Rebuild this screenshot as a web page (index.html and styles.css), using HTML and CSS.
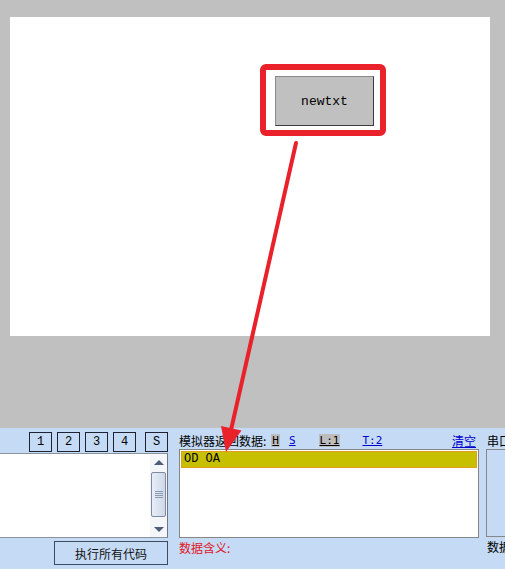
FILE: index.html
```html
<!DOCTYPE html>
<html lang="zh-CN">
<head>
    <meta charset="UTF-8">
    <title>模拟器</title>
    <link rel="stylesheet" href="styles.css">
</head>
<body>

<div class="stage">
    <div class="canvas">
        <div class="widget">newtxt</div>
    </div>
</div>

<div class="panel">
    <div class="col-code">
        <div class="slots">
            <span class="slot">1</span>
            <span class="slot">2</span>
            <span class="slot">3</span>
            <span class="slot">4</span>
            <span class="slot slot-s">S</span>
        </div>
        <div class="code-box">
            <div class="code-area"></div>
            <div class="scrollbar">
                <div class="sb-btn"><span class="tri-up"></span></div>
                <div class="sb-thumb"><span class="grip"></span></div>
                <div class="sb-track"></div>
                <div class="sb-btn"><span class="tri-down"></span></div>
            </div>
        </div>
        <button class="run">执行所有代码</button>
    </div>

    <div class="col-recv">
        <div class="recv-head">
            <span class="caption">模拟器返回数据:</span>
            <span class="tag tag-h">H</span>
            <a class="link link-s" href="#">S</a>
            <span class="tag tag-l">L:1</span>
            <a class="link link-t" href="#">T:2</a>
            <a class="link link-clear" href="#">清空</a>
        </div>
        <div class="recv-box">
            <div class="recv-row">OD OA</div>
        </div>
        <div class="meaning">数据含义:</div>
    </div>

    <div class="col-port">
        <div class="caption">串口</div>
        <div class="port-box"></div>
        <div class="caption port-foot">数据</div>
    </div>
</div>

<!-- annotation drawn over the screenshot -->
<svg class="annot" width="505" height="569" viewBox="0 0 505 569">
    <rect x="263" y="67" width="120" height="66" rx="3" fill="none" stroke="#e8212b" stroke-width="6"/>
    <line x1="296" y1="143" x2="231" y2="430" stroke="#e8212b" stroke-width="4" stroke-linecap="round"/>
    <polygon points="226,452 241.5,430.5 221,426" fill="#e8212b"/>
</svg>

</body>
</html>
```

FILE: styles.css
```css
body {
    margin: 0;
    width: 505px;
    height: 569px;
    overflow: hidden;
    position: relative;
    font-family: "Noto Sans CJK SC", sans-serif;
    font-size: 12px;
    color: #000;
}

.stage {
    height: 428px;
    background: #c0c0c0;
    padding: 17px 0 0 10px;
    box-sizing: border-box;
}

.canvas {
    position: relative;
    width: 480px;
    height: 319px;
    background: #fff;
}

.widget {
    position: absolute;
    left: 265px;
    top: 59px;
    width: 99px;
    height: 50px;
    box-sizing: border-box;
    background: #c0c0c0;
    border: 1px solid #8a8a8a;
    border-right-color: #3c3c3c;
    border-bottom-color: #3c3c3c;
    display: flex;
    align-items: center;
    justify-content: center;
    font-family: "Liberation Mono", monospace;
    font-size: 13px;
}

.panel {
    height: 141px;
    background: #c5dbf5;
    display: flex;
    padding-top: 4px;
    box-sizing: border-box;
}

.col-code {
    width: 168px;
    margin-right: 11px;
    display: flex;
    flex-direction: column;
    align-items: flex-end;
}

.slots {
    display: flex;
    gap: 5px;
    height: 20px;
}

.slot {
    width: 23px;
    height: 20px;
    box-sizing: border-box;
    border: 1px solid #1c2433;
    display: flex;
    align-items: center;
    justify-content: center;
    font-family: "Liberation Mono", monospace;
    font-size: 12px;
}

.slot-s {
    margin-left: 4px;
}

.code-box {
    width: 170px;
    height: 85px;
    margin-top: 1px;
    box-sizing: border-box;
    border: 1px solid #8a929c;
    border-right-color: #6f7680;
    background: #fff;
    display: flex;
}

.code-area {
    flex: 1;
}

.scrollbar {
    width: 17px;
    display: flex;
    flex-direction: column;
    background: #f4f6f9;
}

.sb-btn {
    height: 16px;
    display: flex;
    align-items: center;
    justify-content: center;
}

.tri-up {
    border-left: 5px solid transparent;
    border-right: 5px solid transparent;
    border-bottom: 5px solid #4d5d78;
}

.tri-down {
    border-left: 5px solid transparent;
    border-right: 5px solid transparent;
    border-top: 5px solid #4d5d78;
}

.sb-thumb {
    height: 45px;
    margin: 2px 1px 0;
    box-sizing: border-box;
    border: 1px solid #7d8aa2;
    border-radius: 2px;
    background: linear-gradient(to right, #e8eef8, #cdd7e8);
    display: flex;
    align-items: center;
    justify-content: center;
}

.grip {
    width: 8px;
    height: 7px;
    background: repeating-linear-gradient(to bottom, #8c99b0 0 1px, transparent 1px 2px);
}

.sb-track {
    flex: 1;
}

.run {
    width: 114px;
    height: 24px;
    margin-top: 3px;
    background: #c5dbf5;
    border: 1px solid #3f4a5c;
    font-family: "Noto Sans CJK SC", sans-serif;
    font-size: 12px;
    color: #111;
    padding: 0;
}

.col-recv {
    width: 300px;
    margin-right: 7px;
}

.recv-head {
    height: 17px;
    display: flex;
    align-items: center;
    white-space: nowrap;
}

.tag {
    font-family: "DejaVu Sans Mono", monospace;
    font-size: 11px;
    background: #bdbdbd;
    text-decoration: underline;
    padding: 0 1px;
    line-height: 13px;
}

.link {
    font-family: "DejaVu Sans Mono", monospace;
    font-size: 11px;
    color: #0000cc;
}

.tag-h {
    margin-left: 5px;
}

.link-s {
    margin-left: 9px;
}

.tag-l {
    margin-left: 23px;
}

.link-t {
    margin-left: 22px;
}

.link-clear {
    margin-left: auto;
    margin-right: 3px;
    font-family: "Noto Sans CJK SC", sans-serif;
    font-size: 12px;
}

.recv-box {
    height: 89px;
    box-sizing: border-box;
    border: 1px solid #868686;
    background: #fff;
    padding: 1px;
}

.recv-row {
    height: 17px;
    box-sizing: border-box;
    background: #c6c000;
    border: 1px solid #e0a020;
    font-family: "Liberation Mono", monospace;
    font-size: 12px;
    line-height: 15px;
    padding-left: 2px;
}

.meaning {
    color: #e0141e;
    margin-top: 2px;
    line-height: 15px;
}

.col-port {
    flex: 1;
    min-width: 0;
    white-space: nowrap;
    overflow: hidden;
}

.col-port .caption {
    height: 17px;
    line-height: 17px;
    padding-left: 1px;
}

.port-box {
    height: 88px;
    box-sizing: border-box;
    border: 1px solid #868686;
    border-right: none;
    background: #c5dbf5;
}

.col-port .port-foot {
    margin-top: 2px;
    line-height: 15px;
}

.annot {
    position: absolute;
    left: 0;
    top: 0;
    pointer-events: none;
}
```
